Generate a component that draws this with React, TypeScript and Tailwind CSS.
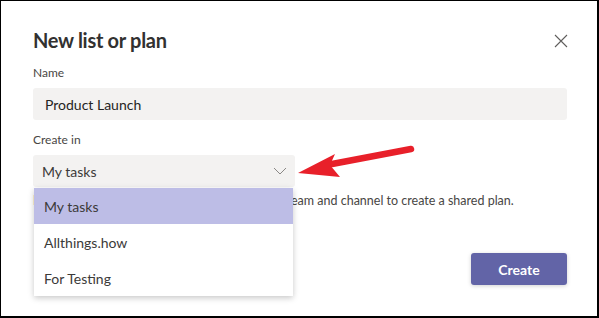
import { useState } from "react";

const options = ["My tasks", "Allthings.how", "For Testing"];

const App = () => {
  const [selected] = useState("My tasks");

  return (
    <div className="relative h-[318px] w-[599px] overflow-hidden border-b-2 border-l border-r-2 border-t border-black bg-white font-['Segoe_UI',Lato,sans-serif] text-[#252423]">
      <div className="flex flex-col pl-[32px] pr-[30px] pt-[25px]">
        {/* Header */}
        <div className="flex h-7 items-center justify-between">
          <h1 className="text-[20px] font-bold leading-7 tracking-[-0.3px] text-[#323130]">
            New list or plan
          </h1>
          <svg width="14" height="14" viewBox="0 0 14 14" className="mr-[-1px] mt-[1px]">
            <path d="M1 1 L13 13 M13 1 L1 13" stroke="#5f5e5c" strokeWidth="1.1" />
          </svg>
        </div>

        {/* Name */}
        <label className="mt-[11px] h-4 text-[12px] leading-4 text-[#484644]">Name</label>
        <div className="mt-[7px] flex h-8 items-center rounded-[3px] bg-[#f3f2f1] px-[12px] text-[14px]">
          Product Launch
        </div>

        {/* Create in */}
        <label className="mt-[12px] h-4 text-[12px] leading-4 text-[#484644]">Create in</label>
        <div className="relative mt-[7px] w-[262px]">
          <div className="flex h-8 items-center justify-between rounded-[3px] bg-[#f3f2f1] pl-[9px] pr-[8px] text-[14px] text-[#3b3a39]">
            <span>{selected}</span>
            <svg width="14" height="8" viewBox="0 0 14 8">
              <path d="M1 1 L7 7 L13 1" fill="none" stroke="#8a8886" strokeWidth="1" />
            </svg>
          </div>
          {/* Dropdown */}
          <div className="absolute left-[1px] top-[33px] z-10 w-[259px] bg-white shadow-[0_2px_6px_rgba(0,0,0,0.22)]">
            {options.map((o) => (
              <div
                key={o}
                className={`flex h-9 items-center pl-[10px] text-[14px] text-[#3b3a39] ${
                  o === selected ? "bg-[#bdbde6]" : ""
                }`}
              >
                {o}
              </div>
            ))}
          </div>
        </div>

        <p className="mt-[6px] h-4 whitespace-nowrap text-[12.5px] leading-4 text-[#484644]">
          Personal lists are visible only to you. Choose a team and channel to create a shared plan.
        </p>

        {/* Footer */}
        <div className="mt-[44px] flex justify-end">
          <button className="h-8 w-24 rounded-[3px] bg-[#6264a7] text-[14px] font-bold text-white shadow-[0_1px_4px_rgba(0,0,0,0.18)]">
            Create
          </button>
        </div>
      </div>

      {/* Annotation arrow */}
      <svg
        className="pointer-events-none absolute left-[-1px] top-[-1px]"
        width="599"
        height="318"
        viewBox="0 0 599 318"
      >
        <line x1="332" y1="164" x2="411" y2="149" stroke="#e8202a" strokeWidth="6.5" strokeLinecap="round" />
        <polygon points="298,173 335,154 330,165 340,177" fill="#e8202a" />
      </svg>
    </div>
  );
};

export default App;
